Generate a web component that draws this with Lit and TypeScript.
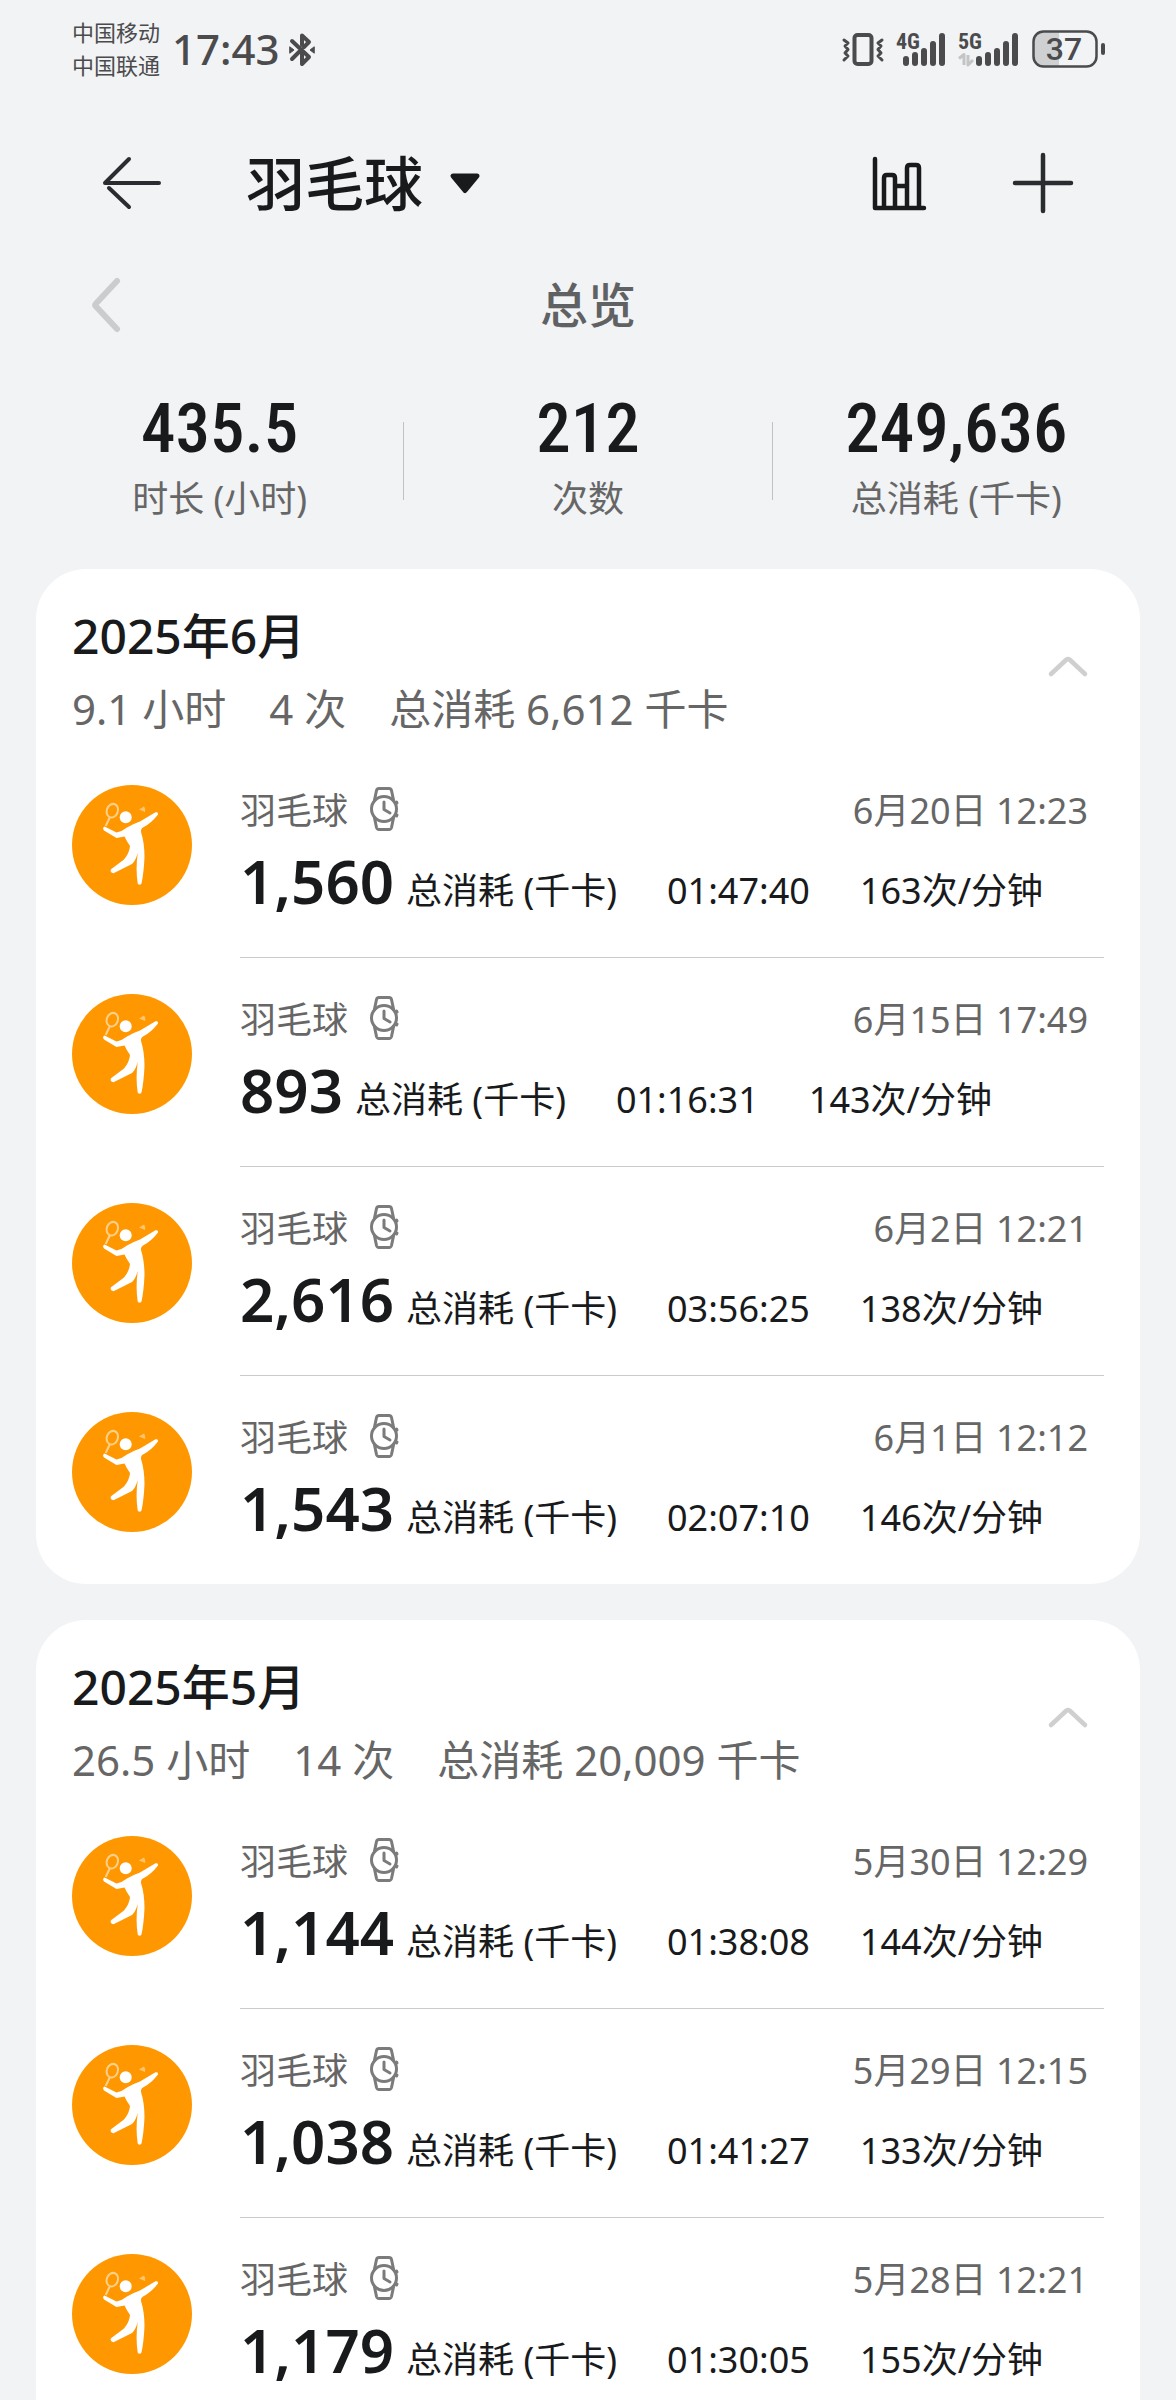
import { LitElement, html, css, svg, nothing } from "lit";
import { customElement, property, state } from "lit/decorators.js";
import { classMap } from "lit/directives/class-map.js";

interface Workout {
  kcal: string;
  duration: string;
  rate: string;
  date: string;
}

interface Month {
  title: string;
  hours: string;
  count: string;
  kcal: string;
  workouts: Workout[];
  partial?: boolean;
}

const MONTHS: Month[] = [
  {
    title: "2025年6月",
    hours: "9.1 小时",
    count: "4 次",
    kcal: "总消耗 6,612 千卡",
    workouts: [
      { kcal: "1,560", duration: "01:47:40", rate: "163次/分钟", date: "6月20日 12:23" },
      { kcal: "893", duration: "01:16:31", rate: "143次/分钟", date: "6月15日 17:49" },
      { kcal: "2,616", duration: "03:56:25", rate: "138次/分钟", date: "6月2日 12:21" },
      { kcal: "1,543", duration: "02:07:10", rate: "146次/分钟", date: "6月1日 12:12" },
    ],
  },
  {
    title: "2025年5月",
    hours: "26.5 小时",
    count: "14 次",
    kcal: "总消耗 20,009 千卡",
    partial: true,
    workouts: [
      { kcal: "1,144", duration: "01:38:08", rate: "144次/分钟", date: "5月30日 12:29" },
      { kcal: "1,038", duration: "01:41:27", rate: "133次/分钟", date: "5月29日 12:15" },
      { kcal: "1,179", duration: "01:30:05", rate: "155次/分钟", date: "5月28日 12:21" },
    ],
  },
];

const TOTALS = [
  { value: "435.5", label: "时长 (小时)" },
  { value: "212", label: "次数" },
  { value: "249,636", label: "总消耗 (千卡)" },
];

const base = css`
  * {
    box-sizing: border-box;
  }
  h1, h2, p, ul, dl, dd, dt {
    margin: 0;
    padding: 0;
    font-weight: inherit;
    font-size: inherit;
  }
  ul {
    list-style: none;
  }
  button {
    border: 0;
    padding: 0;
    background: none;
    font: inherit;
    color: inherit;
    cursor: pointer;
  }
  svg {
    display: block;
    flex: none;
    overflow: visible;
  }
`;

const bars = (x: number, step: number) =>
  [10, 14, 18, 25, 33].map(
    (h, i) => svg`<rect x=${x + i * step} y=${35 - h} width="6" height=${h} rx="3" />`
  );

@customElement("status-bar")
export class StatusBar extends LitElement {
  static styles = [
    base,
    css`
      :host {
        display: flex;
        justify-content: space-between;
        align-items: center;
        height: 98px;
        padding: 0 70px 0 72px;
        color: #4b4b4d;
      }
      .side {
        display: flex;
        align-items: center;
      }
      .carriers {
        font-size: 22px;
        line-height: 33px;
      }
      .clock {
        margin: 0 8px 0 12px;
        font-size: 42px;
        font-weight: 500;
        line-height: 60px;
      }
      .right {
        gap: 12px;
      }
      .gen {
        font-size: 22px;
        font-weight: 700;
        font-family: "Roboto Condensed", Roboto, sans-serif;
      }
      .level {
        font-size: 32px;
        font-weight: 500;
        font-family: Roboto, sans-serif;
      }
    `,
  ];

  render() {
    return html`
      <div class="side">
        <div class="carriers">
          <p>中国移动</p>
          <p>中国联通</p>
        </div>
        <time class="clock">17:43</time>
        <svg width="28" height="36" viewBox="0 0 28 36" fill="none" stroke="currentColor" stroke-width="4" stroke-linecap="round" stroke-linejoin="round" aria-label="蓝牙">
          <path d="M4 10 L21 26 L14 33 V23 M4 28 L13 19 M14 14 V4.500 L21 11 L16 16" />
          <path d="M2 16 L6 19 L2 22 Z M26 16 L22 19 L26 22 Z" fill="currentColor" stroke-width="1" />
        </svg>
      </div>
      <div class="side right">
        <svg width="42" height="36" viewBox="0 0 42 36" fill="none" stroke="currentColor" stroke-linejoin="round" stroke-linecap="round" aria-label="振动">
          <rect x="12.500" y="4" width="17" height="29" rx="3" stroke-width="4" />
          <path d="M2 9 L6 12 L3 15 L6 18.500 L3 22 L6 25 L2 29 M40 9 L36 12 L39 15 L36 18.500 L39 22 L36 25 L40 29" stroke-width="3" />
        </svg>
        <svg width="50" height="36" viewBox="0 0 50 36" fill="currentColor" aria-label="移动信号">
          <text class="gen" x="0" y="18">4G</text>
          ${bars(7, 9)}
        </svg>
        <svg width="62" height="36" viewBox="0 0 62 36" fill="currentColor" aria-label="联通信号">
          <text class="gen" x="0" y="18">5G</text>
          <path d="M1 27.500 L6 23.500 V34 M10 24 V34 L15 29" fill="none" stroke="#c3c4c6" stroke-width="3" stroke-linejoin="round" />
          ${bars(18, 9)}
        </svg>
        <svg width="74" height="38" viewBox="0 0 74 38" aria-label="电量">
          <path d="M27 2 H12 A10 10 0 0 0 2 12 V26 A10 10 0 0 0 12 36 H27 Z" fill="#cfd0d2" />
          <rect x="1.500" y="1.500" width="63" height="35" rx="10" fill="none" stroke="currentColor" stroke-width="2.500" />
          <rect x="69" y="13" width="4" height="12" rx="2" fill="currentColor" />
          <text class="level" x="32" y="30" text-anchor="middle" fill="currentColor">37</text>
        </svg>
      </div>
    `;
  }
}

@customElement("workout-row")
export class WorkoutRow extends LitElement {
  @property({ attribute: false }) workout!: Workout;

  static styles = [
    base,
    css`
      :host {
        display: flex;
        gap: 48px;
        padding-top: 36px;
      }
      .body {
        flex: 1;
        min-width: 0;
        padding: 2px 0 40px;
      }
      :host([divided]) .body {
        border-bottom: 1px solid #cbcbcb;
      }
      .top {
        display: flex;
        align-items: center;
        gap: 18px;
        padding-right: 16px;
        margin-bottom: 10px;
        font-size: 36px;
        line-height: 48px;
        color: #666;
      }
      .date {
        margin-left: auto;
      }
      .bottom {
        display: flex;
        align-items: baseline;
        white-space: nowrap;
        gap: 50px;
        font-size: 36px;
        line-height: 48px;
        color: #191a1c;
      }
      .kcal {
        display: flex;
        align-items: baseline;
        gap: 12px;
      }
      .value {
        font-size: 60px;
        font-weight: 600;
        line-height: 72px;
      }
    `,
  ];

  render() {
    const w = this.workout;
    return html`
      <svg width="120" height="120" viewBox="0 0 120 120" aria-hidden="true">
        <circle cx="60" cy="60" r="60" fill="#ff9800" />
        <g fill="none" stroke="#ffd08a" stroke-width="2">
          <ellipse cx="40.300" cy="25.700" rx="5.500" ry="7" transform="rotate(22 40.300 25.700)" />
          <path d="M37.700 32.500 L33.700 41" />
        </g>
        <path d="M67 24.500 L72 21.500 Q74 24 73 27 Z" fill="#ffc56e" />
        <circle cx="53.700" cy="32.300" r="6" fill="#fff" />
        <path
          d="M32.500 41.500 L44.500 47.500 Q50 46.500 55 42.500 Q62 38.500 68 36.500 L83.500 27.300 Q86.500 26.500 86 29.500 Q79 38.500 71 42.500 Q68.500 44 69 47 Q72.500 58 72.500 72 Q71.800 88 69.500 98.500 Q67.500 101 65.700 98.500 Q63.500 84 65.700 68 Q63.500 76 60 79 L41.500 88.200 Q37.500 87.500 39 84.300 L52 74.500 Q57.500 68 58 61 Q54.500 56 52.500 51.500 L44.500 53 L32 45.500 Q30 42.500 32.500 41.500 Z"
          fill="#fff"
        />
      </svg>
      <div class="body">
        <div class="top">
          <span>羽毛球</span>
          <svg width="36" height="48" viewBox="0 0 36 48" fill="none" stroke="#7b7b7b" stroke-width="3" stroke-linejoin="round" stroke-linecap="round" aria-hidden="true">
            <circle cx="18" cy="22" r="12.500" />
            <path d="M8.500 13 L10.500 3.500 Q11 1.500 13 1.500 H23 Q25 1.500 25.500 3.500 L27.500 13" />
            <path d="M8.500 31 L10.500 40.500 Q11 42.500 13 42.500 H23 Q25 42.500 25.500 40.500 L27.500 31" />
            <path d="M18 15 V22.500 L24 26" />
            <path d="M30.500 15 L31 16 M30.500 29 L31 28" />
          </svg>
          <time class="date">${w.date}</time>
        </div>
        <div class="bottom">
          <span class="kcal"><span class="value">${w.kcal}</span><span>总消耗 (千卡)</span></span>
          <span>${w.duration}</span>
          <span>${w.rate}</span>
        </div>
      </div>
    `;
  }
}

@customElement("month-card")
export class MonthCard extends LitElement {
  @property({ attribute: false }) month!: Month;
  @state() private open = true;

  static styles = [
    base,
    css`
      :host {
        display: block;
      }
      .card {
        padding: 0 36px;
        border-radius: 50px;
        background: #fff;
      }
      .partial {
        border-radius: 50px 50px 0 0;
      }
      .head {
        display: flex;
        align-items: center;
        justify-content: space-between;
        padding: 35px 0 10px;
      }
      .title {
        margin-bottom: 11px;
        font-size: 48px;
        font-weight: 500;
        line-height: 64px;
        color: #191a1c;
      }
      .summary {
        display: flex;
        gap: 43px;
        font-size: 42px;
        line-height: 60px;
        color: #666;
      }
      .toggle {
        align-self: flex-start;
        padding: 14px 0;
      }
      .closed svg {
        transform: rotate(180deg);
      }
    `,
  ];

  render() {
    const m = this.month;
    return html`
      <section class=${classMap({ card: true, partial: !!m.partial })}>
        <header class="head">
          <div>
            <h2 class="title">${m.title}</h2>
            <p class="summary"><span>${m.hours}</span><span>${m.count}</span><span>${m.kcal}</span></p>
          </div>
          <button
            class=${classMap({ toggle: true, closed: !this.open })}
            aria-label="展开或收起"
            aria-expanded=${this.open ? "true" : "false"}
            @click=${() => (this.open = !this.open)}
          >
            <svg width="72" height="72" viewBox="0 0 72 72" fill="none" stroke="#cfcfcf" stroke-width="4.500" stroke-linecap="round" stroke-linejoin="round">
              <path d="M19 56 L34.500 41.500 Q36 40.500 37.500 41.500 L53 56" />
            </svg>
          </button>
        </header>
        ${this.open
          ? html`<ul>
              ${m.workouts.map(
                (w, i) => html`<li><workout-row .workout=${w} ?divided=${i < m.workouts.length - 1}></workout-row></li>`
              )}
            </ul>`
          : nothing}
      </section>
    `;
  }
}

@customElement("app-root")
export class AppRoot extends LitElement {
  static styles = [
    base,
    css`
      :host {
        display: flex;
        flex-direction: column;
        height: 100vh;
        overflow: hidden;
        background: #f1f3f5;
        color: #191a1c;
        font-family: "Noto Sans", "Noto Sans CJK SC", sans-serif;
      }
      .bar {
        display: flex;
        align-items: center;
        flex: none;
        height: 170px;
        padding: 0 96px;
      }
      .picker {
        display: flex;
        align-items: center;
        gap: 27px;
        margin: 0 auto 0 78px;
        font-size: 59px;
        font-weight: 500;
        line-height: 80px;
      }
      .actions {
        display: flex;
        gap: 72px;
      }
      .period {
        display: grid;
        grid-template-columns: 72px 1fr 72px;
        align-items: center;
        flex: none;
        height: 74px;
        padding: 0 72px;
        font-size: 48px;
        font-weight: 500;
        line-height: 72px;
        text-align: center;
        color: #606163;
      }
      .totals {
        display: flex;
        flex: none;
        align-items: center;
        padding: 47px 36px 36px;
      }
      .total {
        display: flex;
        flex: 1;
        flex-direction: column-reverse;
        gap: 6px;
        padding-bottom: 10px;
        text-align: center;
      }
      .total dd {
        font-family: "Roboto Condensed", Roboto, sans-serif;
        font-size: 69px;
        font-weight: 500;
        line-height: 80px;
      }
      .total dt {
        font-size: 36px;
        line-height: 48px;
        color: #666;
      }
      .rule {
        width: 1px;
        height: 78px;
        background: #bfc1c3;
      }
      .list {
        display: flex;
        flex: 1;
        flex-direction: column;
        gap: 36px;
        min-height: 0;
        padding: 0 36px;
        overflow-y: auto;
        scrollbar-width: none;
      }
      .list month-card {
        flex: none;
      }
    `,
  ];

  render() {
    return html`
      <status-bar></status-bar>
      <header class="bar">
        <button aria-label="返回">
          <svg width="72" height="72" viewBox="0 0 72 72" fill="none" stroke="#2b2c2f" stroke-width="4" stroke-linecap="round" stroke-linejoin="round">
            <path d="M63 36 H9 L33 12 M13 41 L33 60" />
          </svg>
        </button>
        <button class="picker" aria-haspopup="listbox">
          <h1>羽毛球</h1>
          <svg width="30" height="22" viewBox="0 0 30 22">
            <path d="M3 4 H27 L15 18.500 Z" fill="#191a1c" stroke="#191a1c" stroke-width="5" stroke-linejoin="round" />
          </svg>
        </button>
        <div class="actions">
          <button aria-label="统计">
            <svg width="72" height="72" viewBox="0 0 72 72" fill="none" stroke="#191a1c" stroke-width="4.500" stroke-linecap="round" stroke-linejoin="round">
              <path d="M11 12 V61 H60 M20 61 V31 Q20 28 23 28 H28 Q31 28 31 31 V61 M43 61 V21 Q43 18 46 18 H52 Q55 18 55 21 V61 M31 39 H43" />
            </svg>
          </button>
          <button aria-label="添加">
            <svg width="72" height="72" viewBox="0 0 72 72" fill="none" stroke="#2b2c2f" stroke-width="4.500" stroke-linecap="round">
              <path d="M7 36 H63 M35 8 V64" />
            </svg>
          </button>
        </div>
      </header>
      <nav class="period">
        <button aria-label="上一段">
          <svg width="72" height="72" viewBox="0 0 72 72" fill="none" stroke="#cbcccd" stroke-width="6" stroke-linecap="round" stroke-linejoin="round">
            <path d="M45 12 L24 34.500 Q22.500 36 24 37.500 L45 60" />
          </svg>
        </button>
        <p>总览</p>
      </nav>
      <dl class="totals">
        ${TOTALS.map(
          (t, i) => html`
            ${i ? html`<div class="rule"></div>` : nothing}
            <div class="total"><dt>${t.label}</dt><dd>${t.value}</dd></div>
          `
        )}
      </dl>
      <main class="list">${MONTHS.map((m) => html`<month-card .month=${m}></month-card>`)}</main>
    `;
  }
}
